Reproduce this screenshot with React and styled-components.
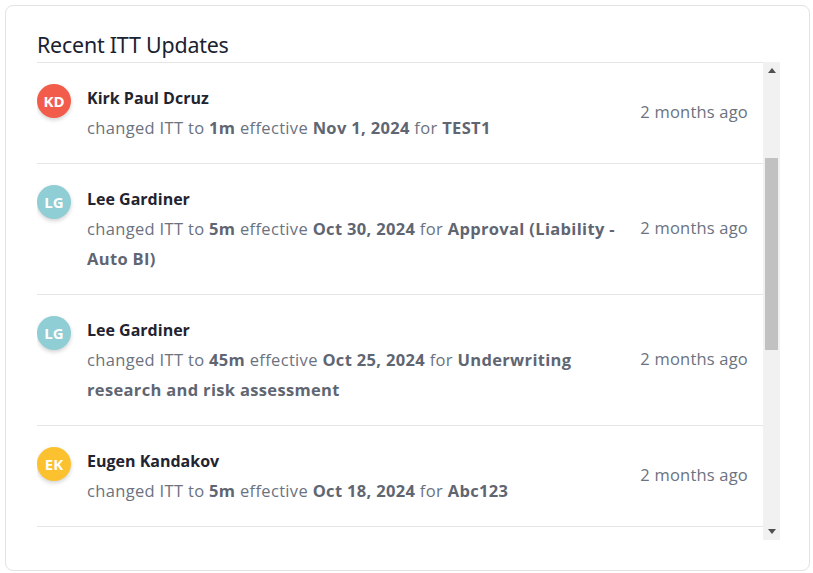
import React from 'react';
import styled, { createGlobalStyle } from 'styled-components';

const GlobalStyle = createGlobalStyle`
  html, body {
    margin: 0;
    padding: 0;
    background: #ffffff;
  }
  body {
    font-family: "Open Sans", "Noto Sans", sans-serif;
  }
`;

const Card = styled.div`
  margin: 5px;
  width: 805px;
  height: 566px;
  box-sizing: border-box;
  border: 1px solid #e3e3e3;
  border-radius: 8px;
  padding: 25px 29px 30px 31px;
  display: flex;
  flex-direction: column;
`;

const Title = styled.h2`
  margin: 0;
  padding-bottom: 3px;
  font-family: "Noto Sans", "Open Sans", sans-serif;
  font-weight: 400;
  font-size: 21.4px;
  line-height: 28px;
  color: #1b2130;
  letter-spacing: -0.2px;
`;

const Viewport = styled.div`
  flex: 1;
  min-height: 0;
  display: flex;
`;

const List = styled.div`
  flex: 1;
  min-width: 0;
  overflow: hidden;
`;

// drawn scrollbar (the page is photographed without native scrollbars)
const ScrollBar = styled.div`
  flex: 0 0 17px;
  background: #f1f1f1;
  display: flex;
  flex-direction: column;
  align-items: center;
`;

const ScrollButton = styled.div`
  flex: 0 0 17px;
  width: 17px;
  display: flex;
  align-items: center;
  justify-content: center;
`;

const ScrollTrack = styled.div`
  flex: 1;
  width: 13px;
`;

const ScrollThumb = styled.div`
  margin-top: 79px;
  height: 192px;
  background: #c1c1c1;
`;

const Row = styled.div`
  display: flex;
  align-items: flex-start;
  border-top: 1px solid #e6e6e6;
  padding: 20px 15px 20px 0;
`;

const Avatar = styled.div`
  flex: 0 0 34px;
  width: 34px;
  height: 34px;
  margin-top: 1px;
  border-radius: 50%;
  background: ${p => p.$color};
  box-shadow: 0 2px 4px rgba(0, 0, 0, 0.18);
  color: #fff;
  font-weight: 700;
  font-size: 15px;
  display: flex;
  align-items: center;
  justify-content: center;
`;

const Body = styled.div`
  flex: 1;
  margin-left: 16px;
  padding-right: 24px;
`;

const Name = styled.div`
  font-weight: 700;
  font-size: 16px;
  line-height: 30px;
  color: #1f2430;
`;

const Detail = styled.div`
  font-size: 16.5px;
  letter-spacing: 0.33px;
  line-height: 30px;
  color: #6b7280;

  b {
    font-weight: 700;
    color: #5f6672;
  }
`;

const Time = styled.div`
  align-self: center;
  margin-bottom: 3px;
  white-space: nowrap;
  font-size: 16.5px;
  letter-spacing: 0.2px;
  color: #6b7280;
`;

const Arrow = ({ down }) => (
  <svg width="8" height="5" viewBox="0 0 8 5">
    <polygon points={down ? '0,0 8,0 4,5' : '0,5 8,5 4,0'} fill="#505050" />
  </svg>
);

const updates = [
  { initials: 'KD', color: '#f25c4a', name: 'Kirk Paul Dcruz', itt: '1m', date: 'Nov 1, 2024', target: 'TEST1' },
  { initials: 'LG', color: '#8fced4', name: 'Lee Gardiner', itt: '5m', date: 'Oct 30, 2024', target: 'Approval (Liability - Auto BI)' },
  { initials: 'LG', color: '#8fced4', name: 'Lee Gardiner', itt: '45m', date: 'Oct 25, 2024', target: 'Underwriting research and risk assessment' },
  { initials: 'EK', color: '#fbc12e', name: 'Eugen Kandakov', itt: '5m', date: 'Oct 18, 2024', target: 'Abc123' },
  { initials: 'EK', color: '#fbc12e', name: 'Eugen Kandakov', itt: '15m', date: 'Oct 12, 2024', target: 'Policy Renewal' },
];

export default function App() {
  return (
    <>
      <GlobalStyle />
      <Card>
        <Title>Recent ITT Updates</Title>
        <Viewport>
          <List>
            {updates.map((u, i) => (
              <Row key={i}>
                <Avatar $color={u.color}>{u.initials}</Avatar>
                <Body>
                  <Name>{u.name}</Name>
                  <Detail>
                    changed ITT to <b>{u.itt}</b> effective <b>{u.date}</b> for <b>{u.target}</b>
                  </Detail>
                </Body>
                <Time>2 months ago</Time>
              </Row>
            ))}
          </List>
          <ScrollBar>
            <ScrollButton><Arrow /></ScrollButton>
            <ScrollTrack>
              <ScrollThumb />
            </ScrollTrack>
            <ScrollButton><Arrow down /></ScrollButton>
          </ScrollBar>
        </Viewport>
      </Card>
    </>
  );
}
